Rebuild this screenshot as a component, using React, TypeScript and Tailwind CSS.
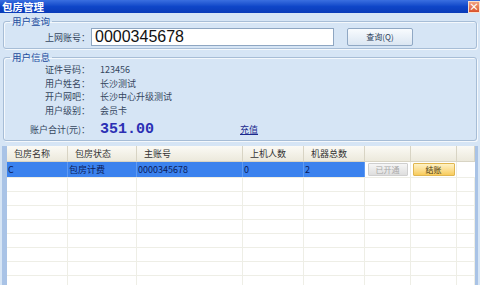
import React from "react";

const cjk = '"Noto Sans CJK SC", "Liberation Sans", sans-serif';

function Fieldset({ title, children, className }: { title: string; children: React.ReactNode; className?: string }) {
  return (
    <fieldset
      className={"mx-[3px] border border-[#a7bdd6] rounded-[3px] shadow-[inset_1px_1px_0_#f4f8fc,1px_1px_0_#f4f8fc] " + (className || "")}
    >
      <legend className="ml-[6px] px-[2px] text-[9.5px] leading-[10px] h-[10px] text-[#1d4d9e]">{title}</legend>
      {children}
    </fieldset>
  );
}

const cols = [61, 69, 106, 61, 61, 46, 46, 18];

export default function App() {
  const info = [
    ["证件号码：", "123456"],
    ["用户姓名：", "长沙测试"],
    ["开户网吧：", "长沙中心升级测试"],
    ["用户级别：", "会员卡"],
  ];
  const headers = ["包房名称", "包房状态", "主账号", "上机人数", "机器总数", "", "", ""];
  const row = ["C", "包房计费", "0000345678", "0", "2"];
  return (
    <div className="w-[480px] h-[285px] overflow-hidden flex flex-col bg-[#d6e5f5]" style={{ fontFamily: cjk }}>
      <div className="h-[13px] shrink-0 flex items-center justify-between bg-gradient-to-b from-[#3a6fe0] via-[#0f46c8] to-[#0a3bb8]">
        <span className="pl-[2px] text-white font-bold text-[10.5px] leading-[13px]">包房管理</span>
        <div className="w-[12px] h-[12px] flex items-center justify-center bg-gradient-to-b from-[#f0a080] to-[#d8502a] border border-[#f8e0d0] text-white text-[10px] font-bold leading-[10px]">
          ×
        </div>
      </div>
      <div className="flex-1 flex flex-col border-b-[2px] border-[#2a2a2a]">
        <Fieldset title="用户查询" className="mt-[3px] pb-[2px]">
          <div className="flex items-center pt-[2px]">
            <span className="w-[86px] text-right text-[9px] text-[#34465e] leading-none">上网账号：</span>
            <div className="ml-[1px] w-[243px] h-[18px] bg-white border border-[#8ea6c2] flex items-center pl-[3px]">
              <span className="text-[16px] leading-none text-[#111]" style={{ fontFamily: '"Liberation Sans", sans-serif' }}>
                0000345678
              </span>
            </div>
            <div className="ml-[13px] w-[66px] h-[18px] rounded-[2px] border border-[#90a8c4] bg-gradient-to-b from-[#f8fbfe] to-[#dbe6f2] flex items-center justify-center text-[8px] text-[#2a3c58] leading-none">
              查询(Q)
            </div>
          </div>
        </Fieldset>
        <Fieldset title="用户信息" className="mt-[3px] pb-[3px]">
          <div className="flex flex-col pt-[1px]">
            {info.map(([k, v]) => (
              <div key={k} className="flex items-center h-[13.5px]">
                <span className="w-[86px] text-right text-[9px] leading-none text-[#34465e]">{k}</span>
                <span className="ml-[10px] text-[9px] leading-none text-[#34465e]">{v}</span>
              </div>
            ))}
            <div className="flex items-center h-[16px] mt-[4px]">
              <span className="w-[86px] text-right text-[9px] leading-none text-[#34465e]">账户合计(元)：</span>
              <span
                className="ml-[10px] w-[140px] text-[15px] font-bold leading-none text-[#2b2fb4]"
                style={{ fontFamily: '"Liberation Mono", monospace' }}
              >
                351.00
              </span>
              <span className="text-[9px] leading-none text-[#1b2a8e] underline">充值</span>
            </div>
          </div>
        </Fieldset>
        <div className="mt-[5px] mx-[2px] flex-1 flex border-l-[5px] border-r-[3px] border-[#a9c3e6] bg-white overflow-hidden">
          <div className="flex flex-col">
            <div className="flex h-[16px] bg-gradient-to-b from-[#fbfaf5] to-[#ece9dc] border-b border-[#d8d4c4]">
              {headers.map((h, i) => (
                <div
                  key={i}
                  style={{ width: cols[i] }}
                  className="shrink-0 h-full flex items-center pl-[7px] text-[9px] leading-none text-[#333] border-r border-[#d8d4c4]"
                >
                  {h}
                </div>
              ))}
            </div>
            <div className="flex h-[15px]">
              {row.map((c, i) => (
                <div
                  key={i}
                  style={{ width: cols[i] }}
                  className="shrink-0 h-full flex items-center pl-[1px] bg-[#3b82ee] text-[9px] leading-none text-[#0b1c5a] border-r border-[#5f9af2]"
                >
                  {c}
                </div>
              ))}
              <div style={{ width: cols[5] }} className="shrink-0 h-full flex items-center justify-center border-r border-[#ebebe2]">
                <div className="w-[40px] h-[13px] rounded-[1px] border border-[#cfcfcf] bg-gradient-to-b from-[#f6f6f6] to-[#dedede] flex items-center justify-center text-[8px] text-[#a8a8a8] leading-none">
                  已开通
                </div>
              </div>
              <div style={{ width: cols[6] }} className="shrink-0 h-full flex items-center justify-center border-r border-[#ebebe2]">
                <div className="w-[42px] h-[13px] rounded-[1px] border border-[#e0b650] bg-gradient-to-b from-[#fff2c4] to-[#f8cc5a] flex items-center justify-center text-[8px] text-[#4a3a10] leading-none">
                  结账
                </div>
              </div>
              <div style={{ width: cols[7] }} className="shrink-0 h-full" />
            </div>
            {Array.from({ length: 8 }).map((_, r) => (
              <div key={r} className="flex h-[14px] border-t border-[#eeeee6]">
                {cols.map((w, i) => (
                  <div key={i} style={{ width: w }} className="shrink-0 h-full border-r border-[#eeeee6]" />
                ))}
              </div>
            ))}
          </div>
        </div>
      </div>
    </div>
  );
}
